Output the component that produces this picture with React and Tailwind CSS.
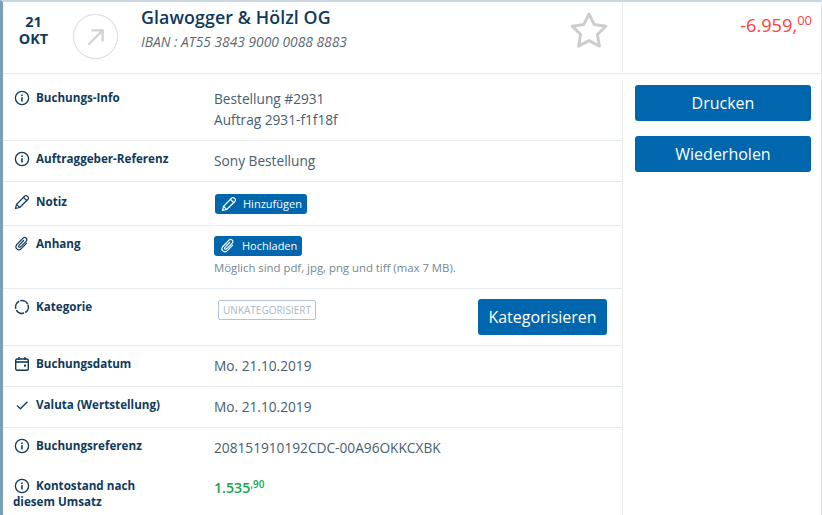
import { useState } from 'react';

function InfoIcon() {
    return (
        <svg width="16" height="16" viewBox="0 0 16 16" fill="none" stroke="#0f3a5c" strokeWidth="1.3">
            <circle cx="8" cy="8" r="6.6" />
            <path d="M8 7.2v4.2" strokeWidth="1.6" />
            <path d="M8 4.4v1.5" strokeWidth="1.6" />
        </svg>
    )
}

function PencilIcon({ color = '#0f3a5c' }) {
    return (
        <svg width="16" height="16" viewBox="0 0 16 16" fill="none" stroke={color} strokeWidth="1.2" strokeLinejoin="round" strokeLinecap="round">
            <path d="M1.5 14.5l1-4.2L10.8 2a1.6 1.6 0 0 1 2.3 0l.9.9a1.6 1.6 0 0 1 0 2.3l-8.3 8.3z" />
            <path d="M9.5 3.4l3.1 3.1" />
            <path d="M2.6 10.4l3 3" />
        </svg>
    )
}

function ClipIcon({ color = '#0f3a5c' }) {
    return (
        <svg width="16" height="16" viewBox="0 0 16 16" fill="none" stroke={color} strokeWidth="1.2" strokeLinecap="round" strokeLinejoin="round">
            <path d="M12.6 7.2l-5 5.2c-1.5 1.5-3.6 1.6-4.8.5-1.2-1.2-1-3.3.5-4.9l5.3-5.4c1.1-1.1 2.7-1.3 3.6-.4.9.9.7 2.4-.4 3.5l-4.9 5c-.6.6-1.4.7-1.9.3-.5-.5-.4-1.3.2-1.9l4.4-4.6" />
        </svg>
    )
}

function CircleDashIcon() {
    return (
        <svg width="16" height="16" viewBox="0 0 16 16" fill="none" stroke="#0f3a5c" strokeWidth="1.5">
            <circle cx="8" cy="8" r="6.4" strokeDasharray="8.6 1.4" transform="rotate(-20 8 8)" />
        </svg>
    )
}

function CalendarIcon() {
    return (
        <svg width="16" height="16" viewBox="0 0 16 16" fill="none" stroke="#0f3a5c" strokeWidth="1.4">
            <rect x="1.7" y="3" width="12.6" height="11.3" rx="1.5" />
            <path d="M1.7 6h12.6" strokeWidth="1.6" />
            <path d="M5 1v3M11 1v3" />
            <rect x="10" y="8.6" width="2" height="2" fill="#0f3a5c" stroke="none" />
        </svg>
    )
}

function CheckIcon() {
    return (
        <svg width="16" height="16" viewBox="0 0 16 16" fill="none" stroke="#0f3a5c" strokeWidth="1.3">
            <path d="M3 8.4l3.4 3.4L13.4 4.8" />
        </svg>
    )
}

function Row({ icon, label, border = true, className = '', children }) {
    return (
        <div className={`flex ${border ? 'border-b border-[#e6ebef]' : ''} ${className}`}>
            <div className="w-[211px] shrink-0 pl-[11px]">
                <div className="flex items-center gap-[6px] h-[16px] text-[11.65px] font-bold text-[#0f3a5c]">
                    <span className="w-[16px] h-[16px] shrink-0">{icon}</span>
                    <span className="whitespace-nowrap">{label}</span>
                </div>
            </div>
            <div className="flex-1 min-w-0">{children}</div>
        </div>
    )
}

function SmallButton({ icon, text, className = '' }) {
    return (
        <div className={`inline-flex items-center h-[20px] rounded-[3px] bg-[#0066ad] text-white text-[11px] ${className}`}>
            {icon}
            <span>{text}</span>
        </div>
    )
}

export default function App() {
    const [amount] = useState({ main: '-6.959,', cents: '00' })

    return (
        <div className="w-[822px] h-[515px] overflow-hidden bg-white border-l-[3px] border-l-[#7a9fb8] border-t-[2px] border-t-[#c9d7e3] border-r-[1px] border-r-[#dfe6ec] flex flex-col font-['Open_Sans',sans-serif] text-[#0f3a5c]">
            {/* header */}
            <div className="h-[72px] shrink-0 flex border-b border-[#e6ebef]">
                <div className="w-[619px] shrink-0 flex">
                    <div className="w-[61px] pt-[11px] text-center text-[14.4px] leading-[17px] font-bold text-[#0f3a5c]">
                        <p>21</p>
                        <p>OKT</p>
                    </div>
                    <div className="mt-[12px] w-[45px] h-[45px] rounded-full border border-[#dcdcdc] shadow-[0_0_2px_rgba(0,0,0,0.08)] flex items-center justify-center ml-[9px]">
                        <svg width="18" height="18" viewBox="0 0 18 18" fill="none" stroke="#d2d2d2" strokeWidth="2.4">
                            <path d="M1.5 16.5L15.5 2.5" />
                            <path d="M4.5 2.4h11.1v11.1" />
                        </svg>
                    </div>
                    <div className="ml-[23px] flex-1 pt-[3px]">
                        <p className="text-[17.8px] leading-[24px] font-semibold text-[#0f3a5c] tracking-[0.1px]">Glawogger & Hölzl OG</p>
                        <p className="mt-[5px] text-[13.8px] leading-[16px] italic text-[#5a6b78]">IBAN : AT55 3843 9000 0088 8883</p>
                    </div>
                    <div className="w-[52px] pt-[9px]">
                        <svg width="40" height="38" viewBox="0 0 40 38" fill="none" stroke="#cdcdcd" strokeWidth="3" strokeLinejoin="round" className="ml-[-1px]">
                            <path d="M20 3l5.2 10.6 11.6 1.7-8.4 8.2 2 11.6L20 29.6 9.6 35.1l2-11.6-8.4-8.2 11.6-1.7z" />
                        </svg>
                    </div>
                </div>
                <div className="flex-1 mt-[1px] mb-[1px] border-l border-[#e6ebef] pr-[9px] pt-[10px] text-right text-[#ff4040]">
                    <span className="text-[18.2px] leading-[24px]">{amount.main}</span>
                    <span className="text-[13px] align-[7px] leading-none">{amount.cents}</span>
                </div>
            </div>

            {/* body */}
            <div className="flex flex-1 min-h-0">
                <div className="w-[619px] shrink-0">
                    <Row icon={<InfoIcon />} label="Buchungs-Info" className="h-[67px] pt-[16px]">
                        <div className="text-[13.7px] leading-[20.5px] text-[#46606f] -mt-[1px]">
                            <p>Bestellung #2931</p>
                            <p>Auftrag 2931-f1f18f</p>
                        </div>
                    </Row>
                    <Row icon={<InfoIcon />} label="Auftraggeber-Referenz" className="h-[41px] pt-[10px]">
                        <p className="text-[13.7px] leading-[21px] text-[#46606f] -mt-[1px]">Sony Bestellung</p>
                    </Row>
                    <Row icon={<PencilIcon />} label="Notiz" className="h-[44px] pt-[12px]">
                        <SmallButton text="Hinzufügen" className="w-[92px] ml-[1px]" icon={<span className="ml-[6px] mr-[6px]"><PencilIcon color="#ffffff" /></span>} />
                    </Row>
                    <Row icon={<ClipIcon />} label="Anhang" className="h-[63px] pt-[10px]">
                        <SmallButton text="Hochladen" className="w-[88px]" icon={<span className="ml-[6px] mr-[6px]"><ClipIcon color="#ffffff" /></span>} />
                        <p className="text-[11.36px] leading-[14px] mt-[1px] text-[#748795]">Möglich sind pdf, jpg, png und tiff (max 7 MB).</p>
                    </Row>
                    <Row icon={<CircleDashIcon />} label="Kategorie" className="h-[57px] pt-[10px]">
                        <div className="flex justify-between pr-[15px]">
                            <div className="mt-[1px] ml-[4px] h-[20px] w-[98px] rounded-[2px] border border-[#b5c3d2] text-[10px] leading-[18px] text-center text-[#a9b7c6] font-medium">UNKATEGORISIERT</div>
                            <div className="h-[36px] w-[129px] rounded-[3px] bg-[#0066ad] text-white text-[16px] leading-[36px] text-center">Kategorisieren</div>
                        </div>
                    </Row>
                    <Row icon={<CalendarIcon />} label="Buchungsdatum" className="h-[41px] pt-[10px]">
                        <p className="text-[13.7px] leading-[21px] text-[#46606f] -mt-[1px]">Mo. 21.10.2019</p>
                    </Row>
                    <Row icon={<CheckIcon />} label="Valuta (Wertstellung)" className="h-[41px] pt-[10px]">
                        <p className="text-[13.7px] leading-[21px] text-[#46606f] -mt-[1px]">Mo. 21.10.2019</p>
                    </Row>
                    <Row icon={<InfoIcon />} label="Buchungsreferenz" border={false} className="h-[50px] pt-[10px]">
                        <p className="text-[13.7px] leading-[21px] text-[#46606f] -mt-[1px]">208151910192CDC-00A96OKKCXBK</p>
                    </Row>
                    <div className="flex">
                        <div className="w-[211px] shrink-0 pl-[10px] text-[11.65px] leading-[16px] font-bold text-[#0f3a5c]">
                            <div className="flex items-center gap-[6px] pl-[1px]">
                                <span className="w-[16px] h-[16px] shrink-0"><InfoIcon /></span>
                                <span>Kontostand nach</span>
                            </div>
                            <p>diesem Umsatz</p>
                        </div>
                        <div className="text-[#14a84b] text-[14.2px] font-semibold leading-[21px] -mt-[1px]">
                            1.535<span className="text-[10px] align-[5px] leading-none">,90</span>
                        </div>
                    </div>
                </div>

                {/* actions */}
                <div className="flex-1 mt-[6px] border-l border-[#e6ebef] pl-[12px] pr-[10px] pt-[5px] flex flex-col gap-[15px]">
                    <div className="h-[36px] rounded-[3px] bg-[#0066ad] text-white text-[16px] leading-[36px] text-center">Drucken</div>
                    <div className="h-[36px] rounded-[3px] bg-[#0066ad] text-white text-[16px] leading-[36px] text-center">Wiederholen</div>
                </div>
            </div>
        </div>
    )
}
